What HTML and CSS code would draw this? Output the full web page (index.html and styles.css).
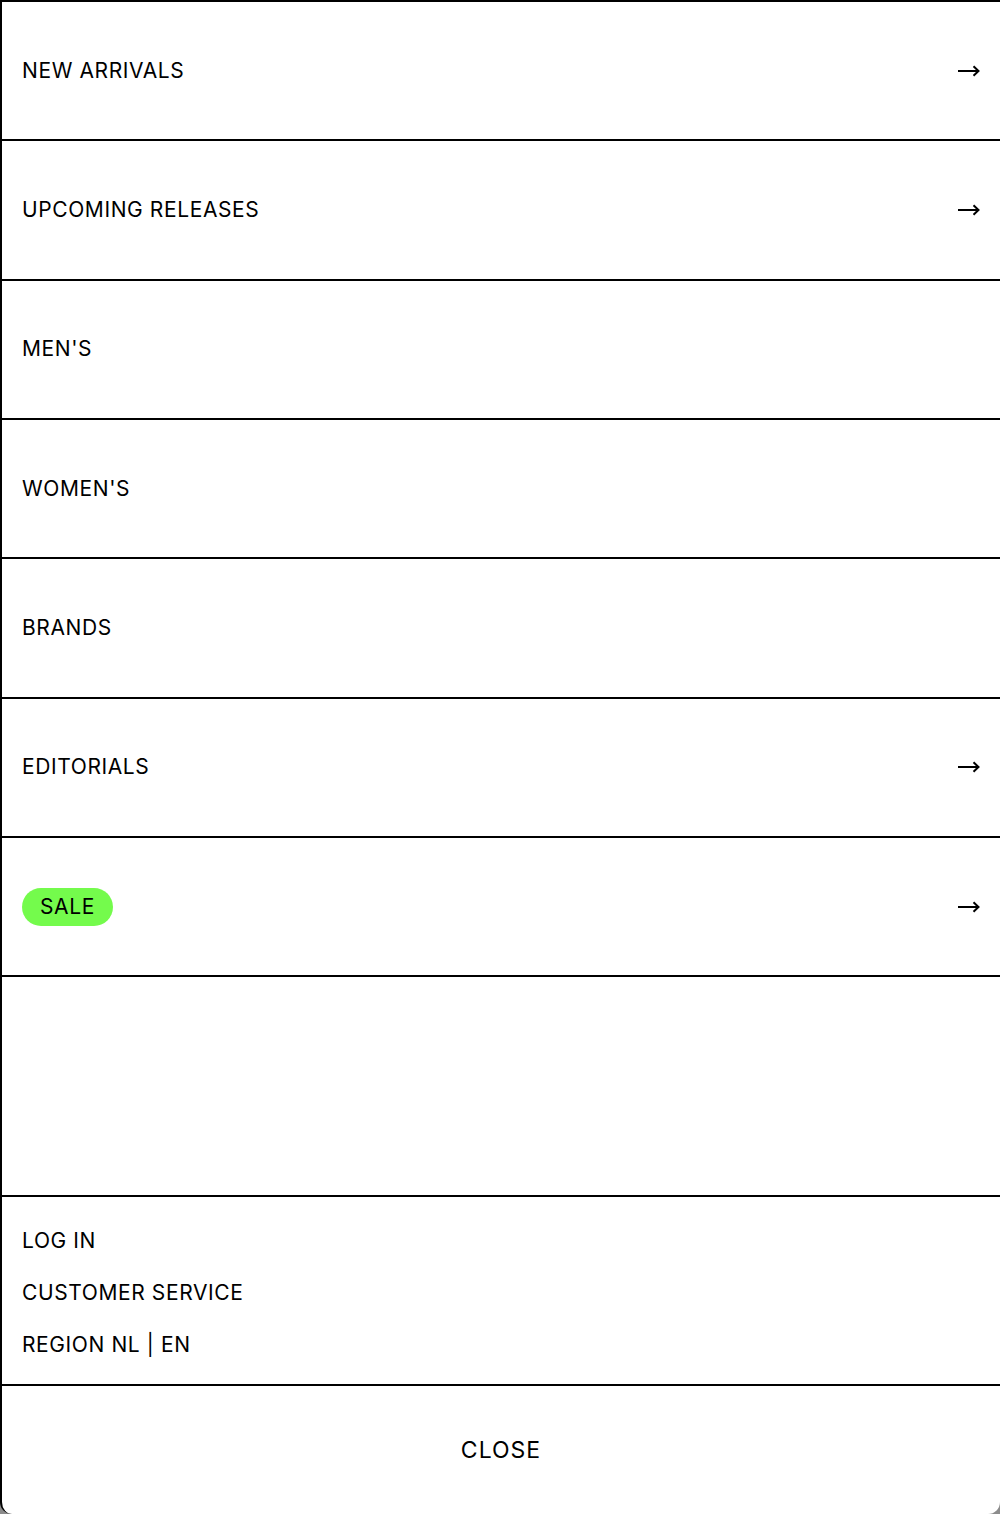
FILE: index.html
```html
<!DOCTYPE html>
<html lang="en">
<head>
<meta charset="utf-8">
<title>Menu</title>
<link rel="stylesheet" href="styles.css">
</head>
<body>
<div class="panel">
  <nav class="nav">
    <a class="nav-item" href="#"><span>NEW ARRIVALS</span><svg class="arrow" width="22" height="12" viewBox="0 0 22 12"><path d="M0 6H20.5M15.5 1.2L20.5 6L15.5 10.8" fill="none" stroke="#000" stroke-width="2"/></svg></a>
    <a class="nav-item" href="#"><span>UPCOMING RELEASES</span><svg class="arrow" width="22" height="12" viewBox="0 0 22 12"><path d="M0 6H20.5M15.5 1.2L20.5 6L15.5 10.8" fill="none" stroke="#000" stroke-width="2"/></svg></a>
    <a class="nav-item" href="#"><span>MEN'S</span></a>
    <a class="nav-item" href="#"><span>WOMEN'S</span></a>
    <a class="nav-item" href="#"><span>BRANDS</span></a>
    <a class="nav-item" href="#"><span>EDITORIALS</span><svg class="arrow" width="22" height="12" viewBox="0 0 22 12"><path d="M0 6H20.5M15.5 1.2L20.5 6L15.5 10.8" fill="none" stroke="#000" stroke-width="2"/></svg></a>
    <a class="nav-item" href="#"><span class="sale">SALE</span><svg class="arrow" width="22" height="12" viewBox="0 0 22 12"><path d="M0 6H20.5M15.5 1.2L20.5 6L15.5 10.8" fill="none" stroke="#000" stroke-width="2"/></svg></a>
  </nav>
  <div class="spacer"></div>
  <div class="links">
    <a class="link" href="#">LOG IN</a>
    <a class="link" href="#">CUSTOMER SERVICE</a>
    <a class="link" href="#">REGION NL | EN</a>
  </div>
  <button class="close" type="button">CLOSE</button>
</div>
</body>
</html>
```
FILE: styles.css
```css
* { box-sizing: border-box; }
html, body { margin: 0; padding: 0; }
body {
  background: #8c8c8c;
  font-family: Inter, "Noto Sans", Arial, sans-serif;
  color: #000;
  width: 1000px;
  height: 1514px;
  overflow: hidden;
}
.panel {
  width: 1000px;
  height: 1514px;
  background: #fff;
  border-top: 2px solid #000;
  border-left: 2px solid #000;
  border-radius: 0 0 12px 12px;
  display: flex;
  flex-direction: column;
  overflow: hidden;
}
.nav { display: flex; flex-direction: column; }
.nav-item {
  height: 139.33px;
  border-bottom: 2px solid #000;
  display: flex;
  align-items: center;
  justify-content: space-between;
  padding: 0 20px 0 20px;
  text-decoration: none;
  color: #000;
  font-size: 21px;
  letter-spacing: 0.6px;
  line-height: 24px;
}
.arrow { display: block; }
.sale {
  background: #74fb4c;
  border-radius: 19px;
  height: 38px;
  padding: 0 18px;
  display: flex;
  align-items: center;
}
.spacer {
  height: 220px;
  border-bottom: 2px solid #000;
  flex: none;
}
.links {
  display: flex;
  flex-direction: column;
  padding: 18px 20px 13px;
  border-bottom: 2px solid #000;
}
.link {
  font-size: 21px;
  letter-spacing: 0.6px;
  line-height: 52px;
  color: #000;
  text-decoration: none;
}
.close {
  flex: 1;
  border: 0;
  background: transparent;
  font-family: inherit;
  font-size: 23px;
  letter-spacing: 1px;
  color: #000;
  cursor: pointer;
  display: flex;
  align-items: center;
  justify-content: center;
  padding: 0;
}
```
